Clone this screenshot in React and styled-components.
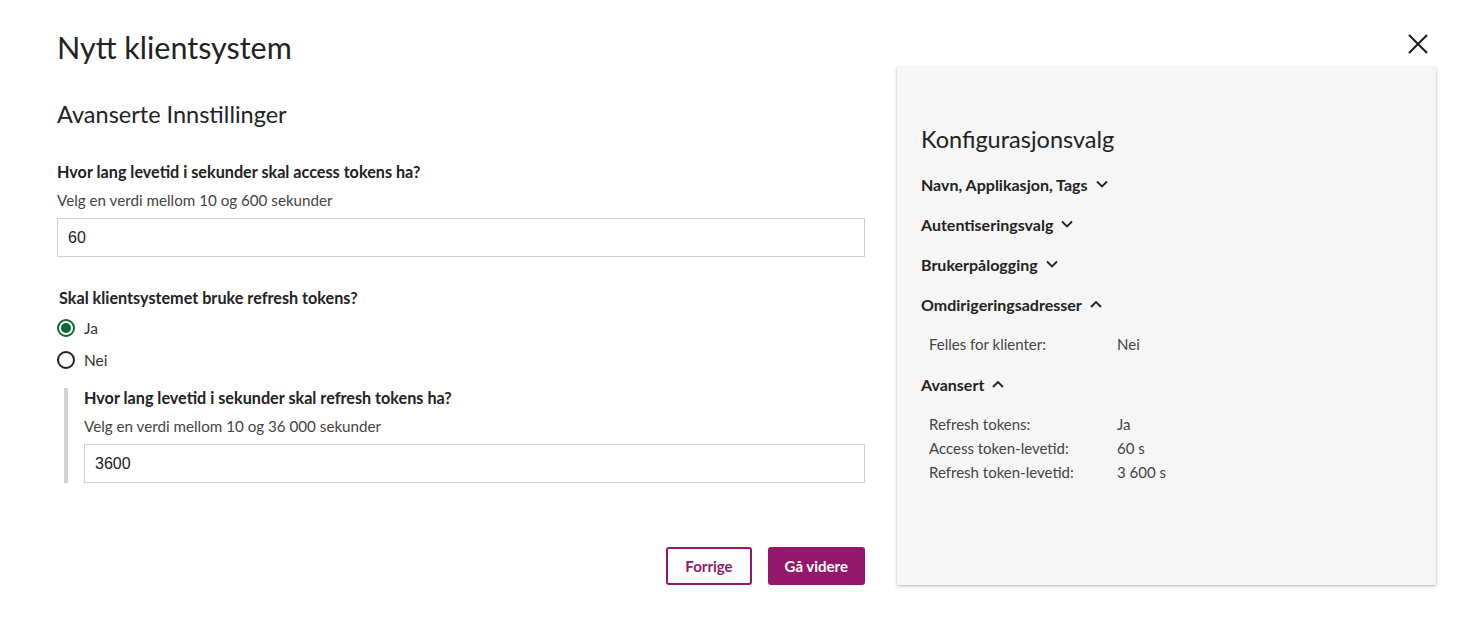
import styled, { createGlobalStyle } from "styled-components";

const Global = createGlobalStyle`
  body {
    margin: 0;
    background: #fff;
    font-family: Lato, "Open Sans", sans-serif;
    color: #222;
  }
`;

const Page = styled.div`
  display: flex;
  gap: 32px;
  padding: 0 36px 0 57px;
  min-height: 631px;
  box-sizing: border-box;
`;

const Main = styled.div`
  width: 808px;
  display: flex;
  flex-direction: column;
`;

const Title = styled.h1`
  margin: 27px 0 0;
  font-size: 30.5px;
  font-weight: 400;
  line-height: 40px;
  color: #222;
`;

const SubTitle = styled.h2`
  margin: 32px 0 0;
  font-size: 23.5px;
  font-weight: 400;
  line-height: 30px;
  color: #222;
`;

const Field = styled.div`
  margin-top: ${(p) => p.$top || 0}px;
  display: flex;
  flex-direction: column;
`;

const Label = styled.div`
  font-size: 16.2px;
  font-weight: 700;
  line-height: 20px;
  color: #222;
  padding-left: ${(p) => p.$indent || 0}px;
`;

const Help = styled.div`
  margin-top: 8px;
  font-size: 15.2px;
  line-height: 20px;
  color: #444;
`;

const Input = styled.input`
  margin-top: 8px;
  height: 39px;
  box-sizing: border-box;
  border: 1px solid #cfcfcf;
  padding: 0 10px;
  font-family: "Liberation Sans", Arial, sans-serif;
  font-size: 16px;
  color: #222;
  outline: none;
`;

const RadioRow = styled.label`
  display: flex;
  align-items: center;
  gap: 9px;
  height: 24px;
  margin-top: ${(p) => p.$top || 0}px;
  font-size: 15.5px;
  color: #333;
`;

const RadioDot = styled.span`
  width: 18px;
  height: 18px;
  box-sizing: border-box;
  border-radius: 50%;
  border: 2px solid ${(p) => (p.$on ? "#0b6a35" : "#222")};
  display: flex;
  align-items: center;
  justify-content: center;
  &::after {
    content: "";
    width: 10px;
    height: 10px;
    border-radius: 50%;
    background: ${(p) => (p.$on ? "#0b6a35" : "transparent")};
  }
`;

const Nested = styled.div`
  margin: 16px 0 0 7px;
  border-left: 4px solid #d4d4d4;
  padding: 0 0 0 16px;
  display: flex;
  flex-direction: column;
`;

const Actions = styled.div`
  margin-top: 64px;
  display: flex;
  justify-content: flex-end;
  gap: 16px;
`;

const Button = styled.button`
  height: 38px;
  box-sizing: border-box;
  padding: 0 ${(p) => (p.$primary ? 15 : 17)}px;
  border-radius: 3px;
  font-family: Lato, sans-serif;
  font-size: 15px;
  font-weight: 700;
  border: 2px solid #93186b;
  background: ${(p) => (p.$primary ? "#93186b" : "#fff")};
  color: ${(p) => (p.$primary ? "#fff" : "#93186b")};
  cursor: pointer;
`;

const Side = styled.div`
  display: flex;
  flex-direction: column;
  flex: 1;
  align-items: flex-end;
`;

const Close = styled.button`
  margin-top: 32px;
  margin-right: 6px;
  width: 24px;
  height: 24px;
  padding: 0;
  background: none;
  border: none;
  display: flex;
  align-items: center;
  justify-content: center;
`;

const Panel = styled.aside`
  margin-top: 11px;
  width: 539px;
  height: 518px;
  box-sizing: border-box;
  background: #f6f6f6;
  box-shadow: 0 1px 3px rgba(0, 0, 0, 0.3);
  padding: 57px 24px 0;
`;

const PanelTitle = styled.h3`
  margin: 0;
  font-size: 23.5px;
  font-weight: 400;
  line-height: 30px;
  color: #222;
`;

const Section = styled.div`
  margin-top: ${(p) => p.$top ?? 10}px;
`;

const SectionHead = styled.div`
  display: flex;
  align-items: center;
  gap: 8px;
  height: 30px;
  font-size: 16px;
  font-weight: 700;
  color: #222;
`;

const Rows = styled.div`
  padding: ${(p) => p.$pad || 15}px 0 0 8px;
  display: grid;
  grid-template-columns: 188px 1fr;
  row-gap: 4px;
  font-size: 15px;
  line-height: 20px;
  color: #444;
`;

const Chevron = ({ up }) => (
  <svg width="12" height="8" viewBox="0 0 12 8" fill="none" stroke="#222" strokeWidth="1.8">
    {up ? <path d="M1 7 L6 2 L11 7" /> : <path d="M1 1.5 L6 6.5 L11 1.5" />}
  </svg>
);

export default function App() {
  return (
    <>
      <Global />
      <Page>
        <Main>
          <Title>Nytt klientsystem</Title>
          <SubTitle>Avanserte Innstillinger</SubTitle>

          <Field $top={33}>
            <Label>Hvor lang levetid i sekunder skal access tokens ha?</Label>
            <Help>Velg en verdi mellom 10 og 600 sekunder</Help>
            <Input defaultValue="60" />
          </Field>

          <Field $top={31}>
            <Label $indent={2}>Skal klientsystemet bruke refresh tokens?</Label>
            <RadioRow $top={8}>
              <RadioDot $on />
              Ja
            </RadioRow>
            <RadioRow $top={8}>
              <RadioDot />
              Nei
            </RadioRow>
            <Nested>
              <Label>Hvor lang levetid i sekunder skal refresh tokens ha?</Label>
              <Help>Velg en verdi mellom 10 og 36 000 sekunder</Help>
              <Input defaultValue="3600" />
            </Nested>
          </Field>

          <Actions>
            <Button>Forrige</Button>
            <Button $primary>Gå videre</Button>
          </Actions>
        </Main>

        <Side>
          <Close aria-label="Lukk">
            <svg width="22" height="22" viewBox="0 0 22 22" stroke="#222" strokeWidth="2.2">
              <path d="M2 2 L20 20 M20 2 L2 20" />
            </svg>
          </Close>
          <Panel>
            <PanelTitle>Konfigurasjonsvalg</PanelTitle>
            <Section $top={15}>
              <SectionHead>Navn, Applikasjon, Tags <Chevron /></SectionHead>
            </Section>
            <Section>
              <SectionHead>Autentiseringsvalg <Chevron /></SectionHead>
            </Section>
            <Section>
              <SectionHead>Brukerpålogging <Chevron /></SectionHead>
            </Section>
            <Section>
              <SectionHead>Omdirigeringsadresser <Chevron up /></SectionHead>
              <Rows>
                <span>Felles for klienter:</span>
                <span>Nei</span>
              </Rows>
            </Section>
            <Section $top={15}>
              <SectionHead>Avansert <Chevron up /></SectionHead>
              <Rows $pad={15}>
                <span>Refresh tokens:</span>
                <span>Ja</span>
                <span>Access token-levetid:</span>
                <span>60 s</span>
                <span>Refresh token-levetid:</span>
                <span>3 600 s</span>
              </Rows>
            </Section>
          </Panel>
        </Side>
      </Page>
    </>
  );
}
